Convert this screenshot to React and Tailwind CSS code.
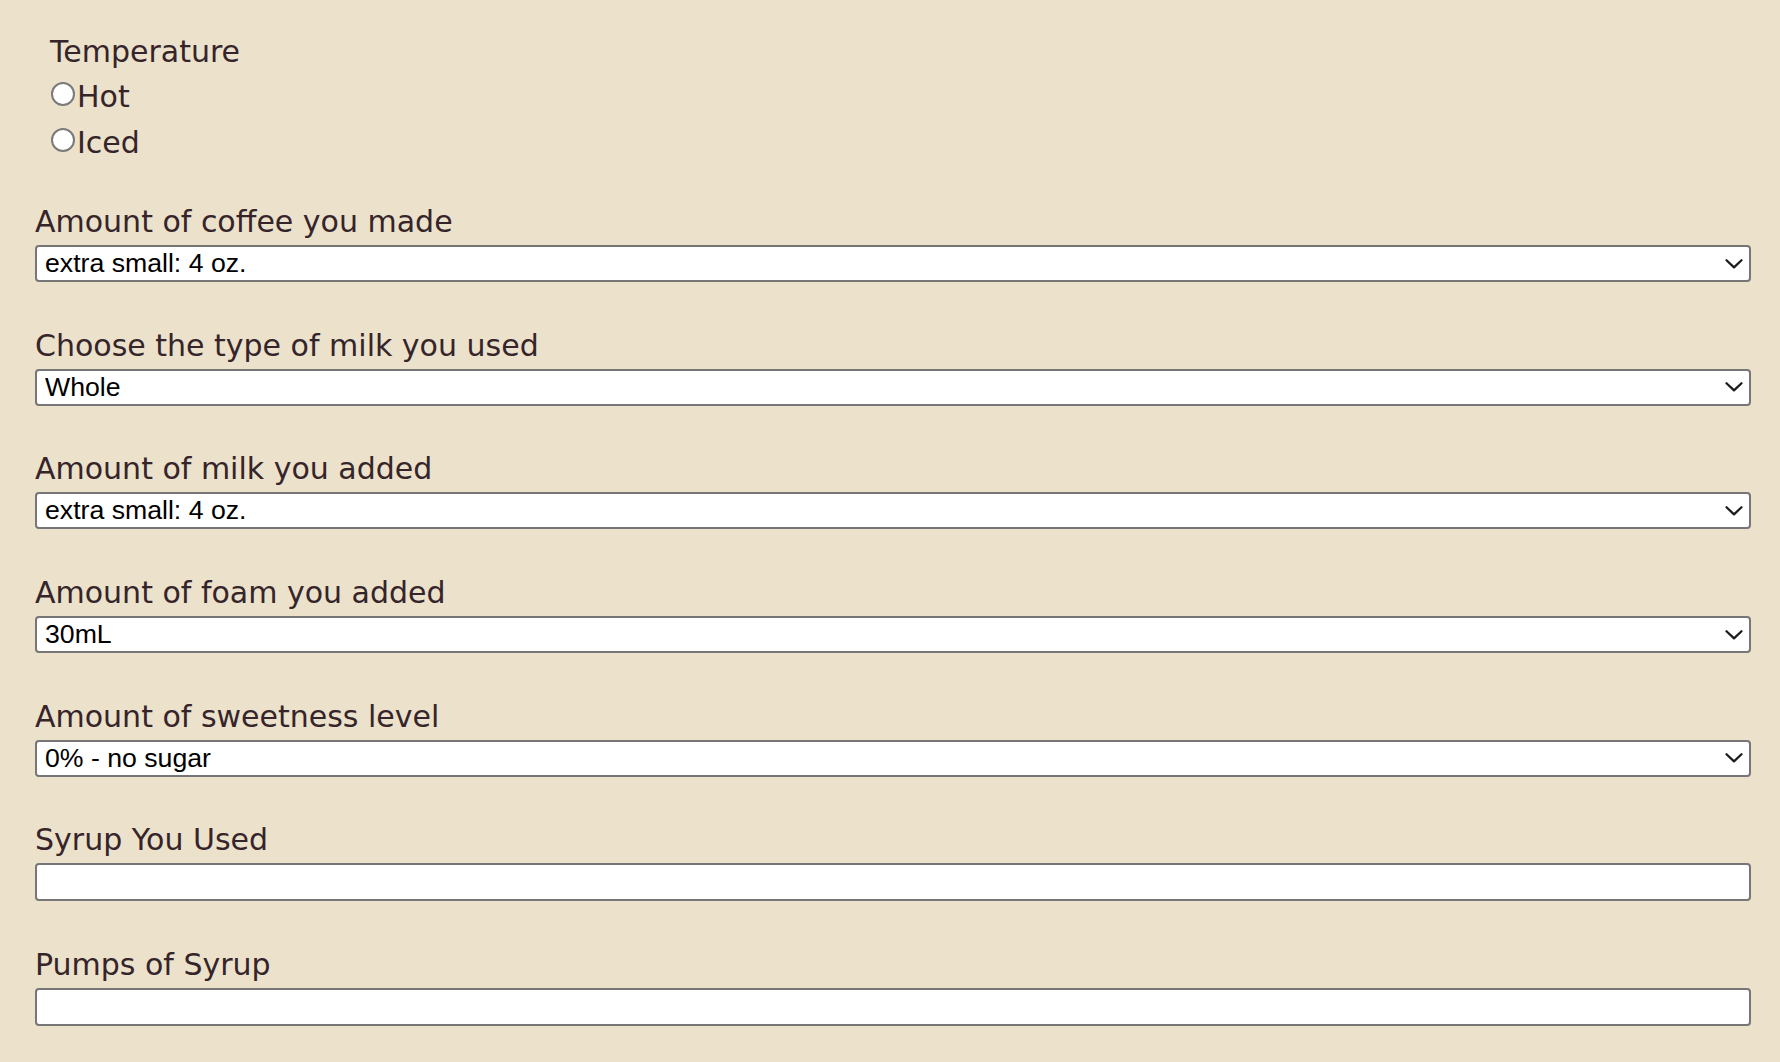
import React from "react";

const selects = [
  { label: "Amount of coffee you made", value: "extra small: 4 oz.", options: ["extra small: 4 oz.", "small: 8 oz.", "medium: 12 oz.", "large: 16 oz."] },
  { label: "Choose the type of milk you used", value: "Whole", options: ["Whole", "2%", "Skim", "Oat", "Almond", "Soy"] },
  { label: "Amount of milk you added", value: "extra small: 4 oz.", options: ["extra small: 4 oz.", "small: 8 oz.", "medium: 12 oz.", "large: 16 oz."] },
  { label: "Amount of foam you added", value: "30mL", options: ["30mL", "60mL", "90mL"] },
  { label: "Amount of sweetness level", value: "0% - no sugar", options: ["0% - no sugar", "25%", "50%", "75%", "100%"] },
];

function Chevron() {
  return (
    <svg
      className="pointer-events-none absolute right-[8px] top-1/2 -translate-y-1/2"
      width="18"
      height="10"
      viewBox="0 0 18 10"
      fill="none"
    >
      <polyline points="1.5,1.2 9,8.4 16.5,1.2" stroke="#1b1b1b" strokeWidth="2.2" strokeLinecap="round" strokeLinejoin="round" />
    </svg>
  );
}

function Radio({ name, label }) {
  return (
    <label className="flex items-start leading-[46px]">
      <input
        type="radio"
        name={name}
        className="mt-[8px] ml-[1px] mr-[2px] h-[24px] w-[24px] shrink-0 appearance-none rounded-full border-2 border-[#7a7a7a] bg-white"
      />
      <span>{label}</span>
    </label>
  );
}

export default function App() {
  return (
    <div
      className="min-h-screen bg-[#ece1ca] pl-[35px] pr-[29px] pt-[30px] pb-[40px] text-[30px] text-[#35252a]"
      style={{ fontFamily: '"DejaVu Sans", "Noto Sans", sans-serif' }}
    >
      <div className="pl-[15px]">
        <div className="leading-[44px]">Temperature</div>
        <Radio name="temp" label="Hot" />
        <Radio name="temp" label="Iced" />
      </div>

      <div className="mt-[32px] flex flex-col gap-[39.7px]">
        {selects.map((s) => (
          <div key={s.label} className="flex flex-col">
            <div className="leading-[47px]">{s.label}</div>
            <div className="relative">
              <select
                defaultValue={s.value}
                className="block h-[37px] w-full appearance-none rounded-[4px] border-2 border-[#767676] bg-white pl-[8px] pr-[36px] text-[26.67px] leading-[33px] text-black outline-none"
                style={{ fontFamily: '"Liberation Sans", Arial, sans-serif' }}
              >
                {s.options.map((o) => (
                  <option key={o}>{o}</option>
                ))}
              </select>
              <Chevron />
            </div>
          </div>
        ))}
        {["Syrup You Used", "Pumps of Syrup"].map((l) => (
          <div key={l} className="flex flex-col">
            <div className="leading-[47px]">{l}</div>
            <input
              type="text"
              className="block h-[38px] w-full rounded-[4px] border-2 border-[#767676] bg-white px-[8px] text-[26.67px] text-black outline-none"
              style={{ fontFamily: '"Liberation Sans", Arial, sans-serif' }}
            />
          </div>
        ))}
      </div>
    </div>
  );
}
